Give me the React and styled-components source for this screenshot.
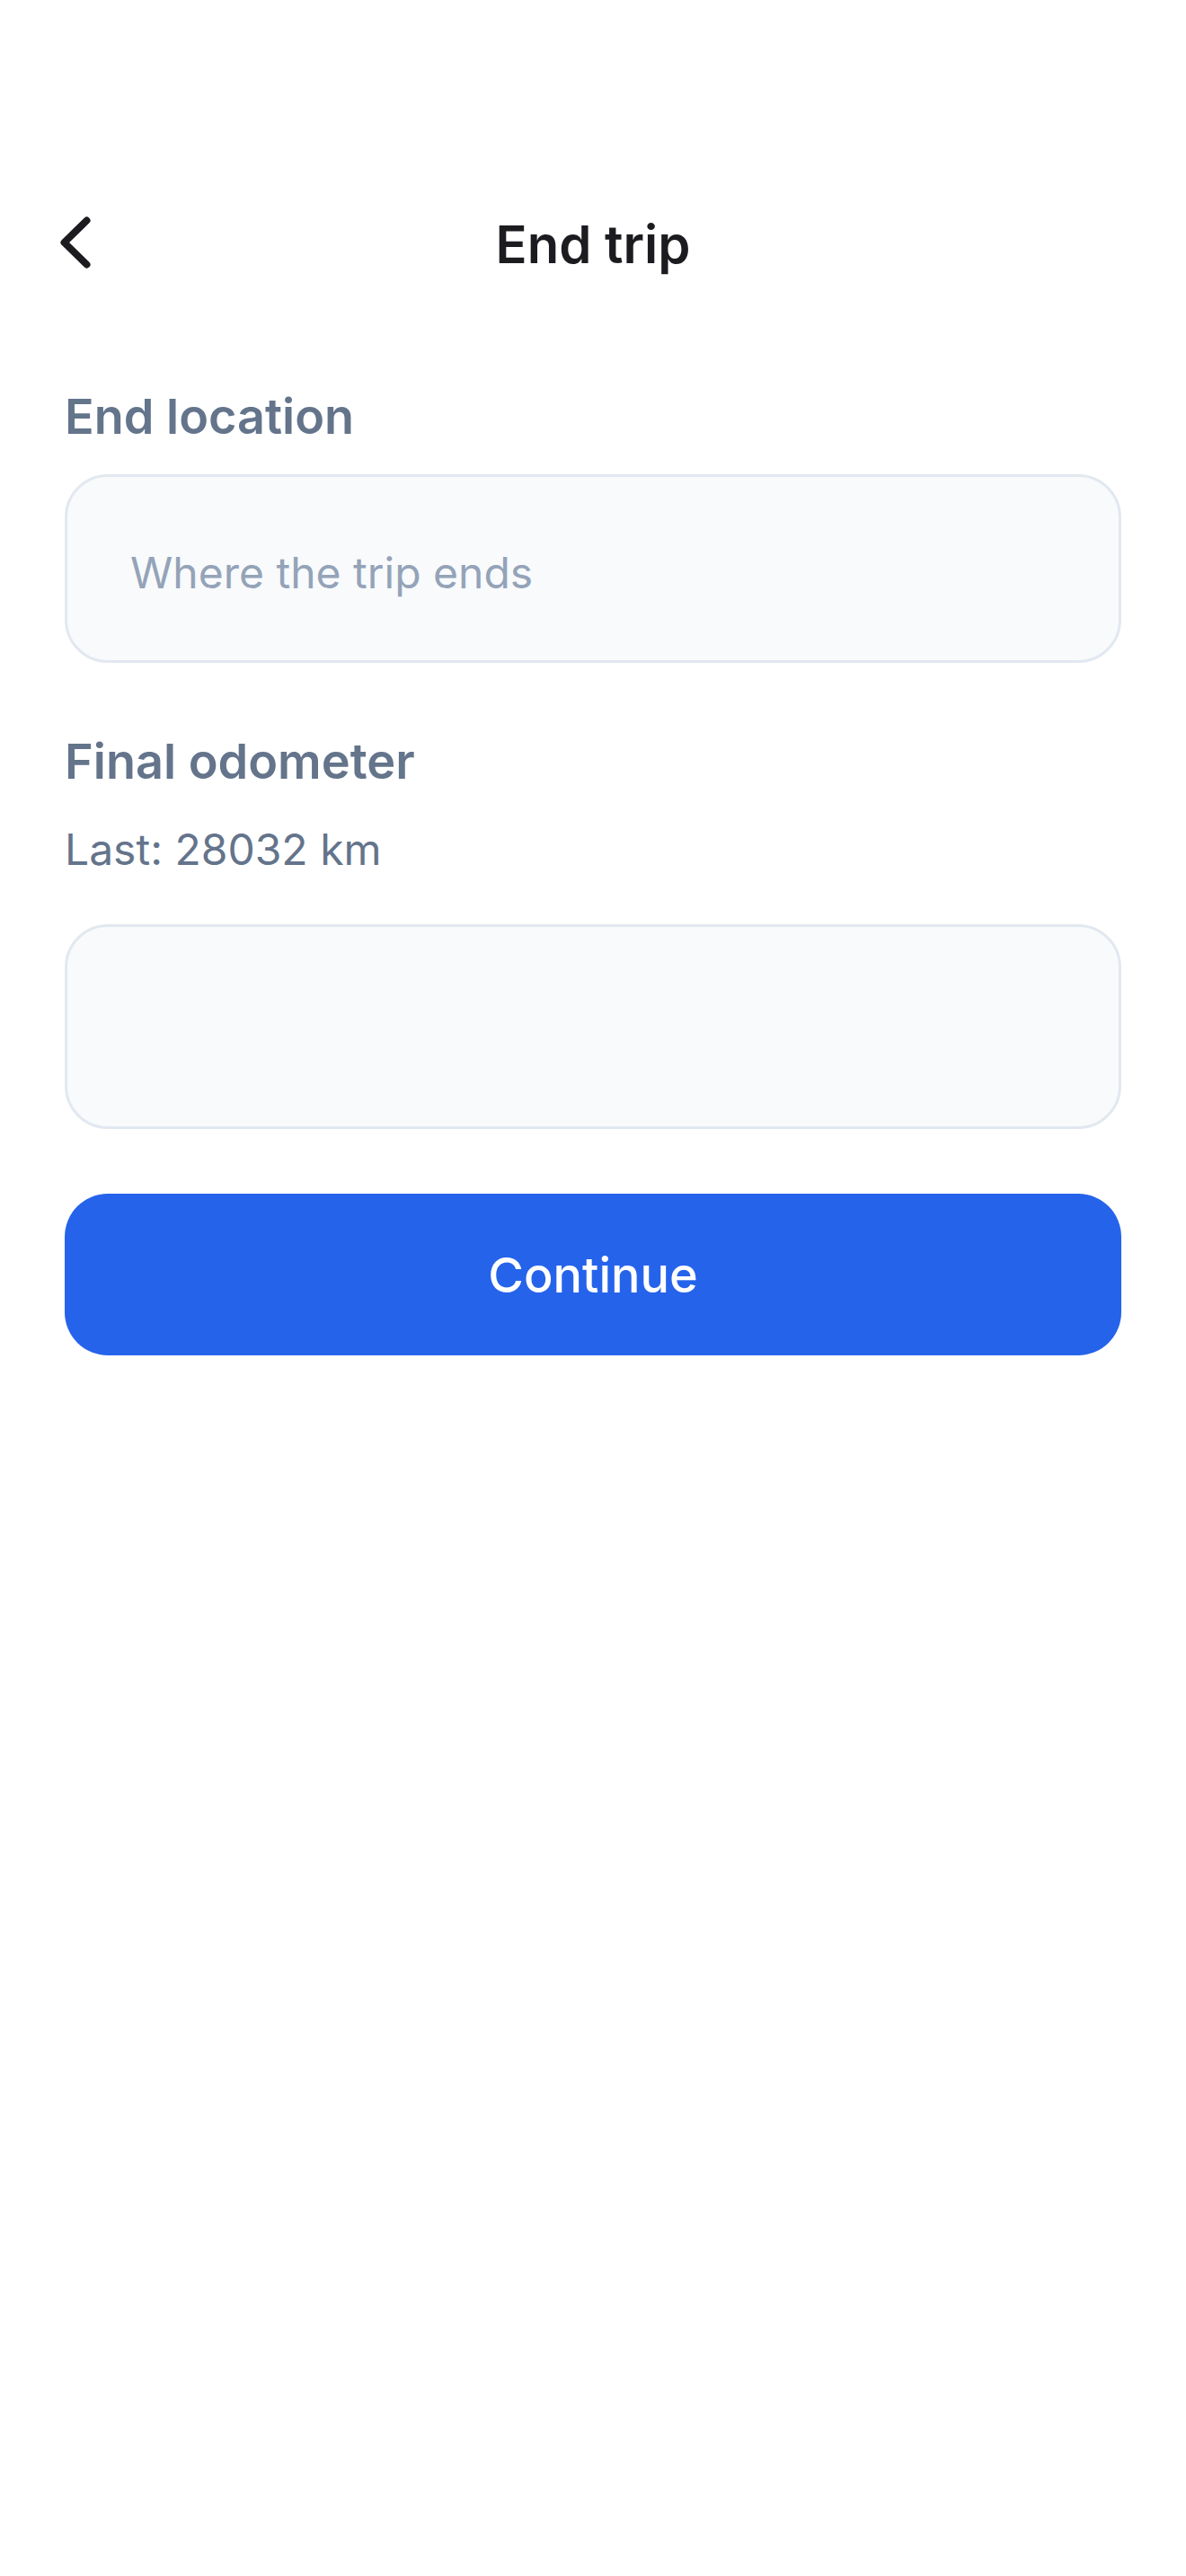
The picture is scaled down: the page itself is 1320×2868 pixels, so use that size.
import React, { useState } from "react";
import styled, { createGlobalStyle } from "styled-components";

const GlobalStyle = createGlobalStyle`
  *, *::before, *::after { box-sizing: border-box; }
  body {
    margin: 0;
    background: #ffffff;
    font-family: Inter, "Liberation Sans", sans-serif;
    -webkit-font-smoothing: antialiased;
  }
`;

const Screen = styled.div`
  min-height: 100vh;
  padding-top: 204px;
`;

const Header = styled.header`
  display: grid;
  grid-template-columns: 132px 1fr 132px;
  align-items: center;
  height: 136px;
`;

const BackButton = styled.button`
  display: flex;
  align-items: center;
  justify-content: center;
  height: 132px;
  padding: 0 0 4px 36px;
  border: 0;
  background: none;
  color: #1c1b1f;
  cursor: pointer;
`;

const Title = styled.h1`
  margin: 0;
  font-size: 58px;
  line-height: 76px;
  font-weight: 600;
  text-align: center;
  color: #1c1b1f;
`;

const Form = styled.form`
  display: flex;
  flex-direction: column;
  gap: 72px;
  padding: 86px 72px 72px;
`;

const Field = styled.div`
  display: flex;
  flex-direction: column;
`;

const Label = styled.label`
  font-size: 54px;
  line-height: 76px;
  font-weight: 600;
  color: #64748b;
`;

const Hint = styled.p`
  margin: 22px 0 0;
  font-size: 48px;
  line-height: 76px;
  color: #64748b;
`;

const TextInput = styled.input`
  width: 100%;
  height: ${(p) => (p.$tall ? 228 : 210)}px;
  margin-top: ${(p) => (p.$tall ? 45 : 26)}px;
  padding: 8px 70px 0;
  border: 3px solid #e2e8f0;
  border-radius: 48px;
  outline: 0;
  background: #f8fafc;
  font: inherit;
  font-size: 48px;
  color: #1c1b1f;

  &::placeholder {
    color: #94a3b8;
    opacity: 1;
  }
`;

const SubmitButton = styled.button`
  height: 180px;
  padding: 0;
  border: 0;
  border-radius: 48px;
  background: #2563eb;
  font: inherit;
  font-size: 54px;
  font-weight: 500;
  color: #ffffff;
  cursor: pointer;
`;

export default function App() {
  const [location, setLocation] = useState("");
  const [odometer, setOdometer] = useState("");

  return (
    <Screen>
      <GlobalStyle />
      <Header>
        <BackButton type="button" aria-label="Back">
          <svg width="34" height="58" viewBox="0 0 34 58" fill="none" aria-hidden="true">
            <path d="M29.5 4.5 4.5 29l25 24.5" stroke="currentColor" strokeWidth="8" strokeLinecap="round" strokeLinejoin="round" />
          </svg>
        </BackButton>
        <Title>End trip</Title>
      </Header>
      <Form onSubmit={(e) => e.preventDefault()}>
        <Field>
          <Label htmlFor="end-location">End location</Label>
          <TextInput
            id="end-location"
            type="text"
            placeholder="Where the trip ends"
            value={location}
            onChange={(e) => setLocation(e.target.value)}
          />
        </Field>
        <Field>
          <Label htmlFor="odometer">Final odometer</Label>
          <Hint id="odometer-hint">Last: 28032 km</Hint>
          <TextInput
            id="odometer"
            type="text"
            inputMode="numeric"
            aria-describedby="odometer-hint"
            $tall
            value={odometer}
            onChange={(e) => setOdometer(e.target.value)}
          />
        </Field>
        <SubmitButton type="submit">Continue</SubmitButton>
      </Form>
    </Screen>
  );
}
